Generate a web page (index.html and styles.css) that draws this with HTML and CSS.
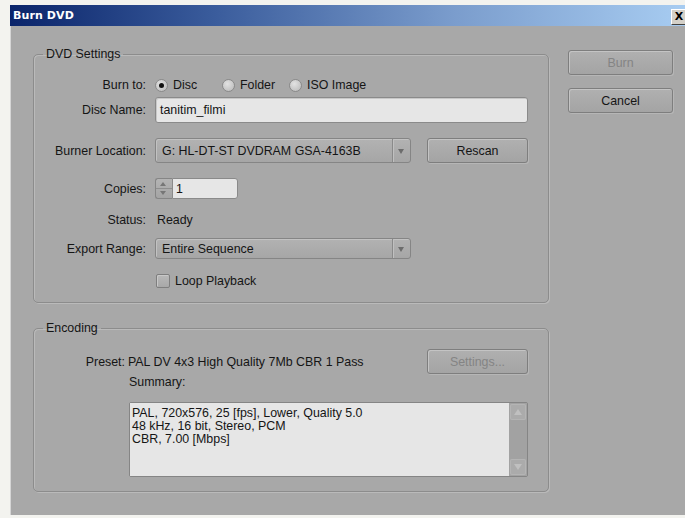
FILE: index.html
```html
<!DOCTYPE html>
<html lang="en">
<head>
<meta charset="utf-8">
<title>Burn DVD</title>
<link rel="stylesheet" href="styles.css">
</head>
<body>
<div class="window">
  <div class="titlebar">
    <span class="title">Burn DVD</span>
    <span class="close">X</span>
  </div>
  <div class="client">
    <div class="main">
      <fieldset class="group settings">
        <legend>DVD Settings</legend>

        <div class="row r-burn">
          <span class="lbl">Burn to:</span>
          <div class="radios">
            <label class="opt"><span class="radio checked"></span>Disc</label>
            <label class="opt"><span class="radio"></span>Folder</label>
            <label class="opt"><span class="radio"></span>ISO Image</label>
          </div>
        </div>

        <div class="row r-name">
          <span class="lbl">Disc Name:</span>
          <div class="field name">tanitim_filmi</div>
        </div>

        <div class="row r-burner">
          <span class="lbl">Burner Location:</span>
          <div class="select">
            <span class="sel-text">G: HL-DT-ST DVDRAM GSA-4163B</span>
            <span class="sel-arrow"></span>
          </div>
          <button class="btn rescan">Rescan</button>
        </div>

        <div class="row r-copies">
          <span class="lbl">Copies:</span>
          <div class="spin">
            <span class="spin-btns"><span class="up"></span><span class="down"></span></span>
            <span class="spin-val">1</span>
          </div>
        </div>

        <div class="row r-status">
          <span class="lbl">Status:</span>
          <span class="val">Ready</span>
        </div>

        <div class="row r-range">
          <span class="lbl">Export Range:</span>
          <div class="select">
            <span class="sel-text">Entire Sequence</span>
            <span class="sel-arrow"></span>
          </div>
        </div>

        <div class="row r-loop">
          <span class="lbl"></span>
          <label class="check"><span class="box"></span>Loop Playback</label>
        </div>
      </fieldset>

      <fieldset class="group encoding">
        <legend>Encoding</legend>

        <div class="row r-preset">
          <span class="lbl enc-lbl">Preset:</span>
          <span class="val">PAL DV 4x3 High Quality 7Mb CBR 1 Pass</span>
          <button class="btn disabled settings-btn">Settings...</button>
        </div>

        <div class="r-summary">Summary:</div>

        <div class="summary-box">
          <div class="summary-text">PAL, 720x576, 25 [fps], Lower, Quality 5.0<br>48 kHz, 16 bit, Stereo, PCM<br>CBR, 7.00 [Mbps]</div>
          <div class="scrollbar">
            <span class="sb-btn sb-up"></span>
            <span class="sb-track"></span>
            <span class="sb-btn sb-down"></span>
          </div>
        </div>
      </fieldset>
    </div>

    <div class="actions">
      <button class="btn disabled">Burn</button>
      <button class="btn">Cancel</button>
    </div>
  </div>
</div>
</body>
</html>
```

FILE: styles.css
```css
html, body {
  margin: 0;
  padding: 0;
  background: #f3f3ef;
  overflow: hidden;
}

body {
  font-family: "Liberation Sans", Arial, sans-serif;
  font-size: 12.4px;
  color: #151515;
}

.window {
  margin: 5px 0 0 10px;
  width: 679px;
}

/* caption bar */
.titlebar {
  height: 21px;
  display: flex;
  align-items: center;
  justify-content: space-between;
  background: linear-gradient(to right, #0a246a 0%, #3a5c9c 30%, #7a9ccc 65%, #a8cdf2 100%);
}

.title {
  font-family: "DejaVu Sans", Verdana, sans-serif;
  font-weight: bold;
  font-size: 11px;
  color: #ffffff;
  padding-left: 3px;
  letter-spacing: 0.1px;
}

.close {
  width: 14px;
  height: 14px;
  margin-right: 2px;
  margin-top: 3px;
  background: #d4d0c8;
  border: 1px solid;
  border-color: #ffffff #404040 #404040 #ffffff;
  font-family: "DejaVu Sans", Verdana, sans-serif;
  font-weight: bold;
  font-size: 11px;
  line-height: 14px;
  text-align: center;
  color: #000;
}

/* dialog body */
.client {
  height: 489px;
  background: #a8a8a8;
  border-left: 1px solid #d6d6d6;
  box-sizing: border-box;
  padding-left: 22px;
  display: flex;
  align-items: flex-start;
}

.main {
  width: 516px;
}

.group {
  margin: 0;
  padding: 14px 20px 13px 0;
  border: 1px solid #8c8c8c;
  border-radius: 5px;
  box-shadow: inset 1px 1px 0 #bababa, 1px 1px 0 #bababa;
}

.group legend {
  margin-left: 9px;
  padding: 0 3px;
  line-height: 14px;
  color: #151515;
}

.settings {
  margin-top: 21px;
}

.encoding {
  margin-top: 18px;
  padding-bottom: 14px;
}

.row {
  display: flex;
  align-items: center;
}

.lbl {
  width: 112px;
  flex: none;
  text-align: right;
  margin-right: 9px;
}

.r-burn   { height: 20px; }
.r-name   { height: 26px; margin-top: 2px; }
.r-burner { height: 25px; margin-top: 15px; }
.r-copies { height: 21px; margin-top: 15px; }
.r-status { height: 20px; margin-top: 11px; }
.r-range  { height: 21px; margin-top: 8px; }
.r-loop   { height: 16px; margin-top: 14px; }

/* radio group */
.radios {
  display: flex;
  align-items: center;
}

.opt {
  display: flex;
  align-items: center;
  width: 67px;
}

.opt:last-child {
  width: auto;
}

.radio {
  width: 11px;
  height: 11px;
  border: 1px solid #8a8a8a;
  border-radius: 50%;
  background: radial-gradient(circle at 40% 35%, #e2e2e2 0%, #c4c4c4 70%, #b2b2b2 100%);
  margin-right: 5px;
  position: relative;
  flex: none;
}

.radio.checked::after {
  content: "";
  position: absolute;
  left: 3px;
  top: 3px;
  width: 5px;
  height: 5px;
  border-radius: 50%;
  background: #111;
}

/* text fields */
.field {
  box-sizing: border-box;
  height: 26px;
  width: 373px;
  background: #e6e6e6;
  border: 1px solid #8a8a8a;
  border-radius: 3px;
  padding: 0 4px;
  line-height: 24px;
  box-shadow: inset 1px 1px 0 #c8c8c8;
}

/* dropdowns */
.select {
  box-sizing: border-box;
  width: 256px;
  height: 100%;
  display: flex;
  border: 1px solid #858585;
  border-radius: 3px;
  background: linear-gradient(#b2b2b2, #a6a6a6);
  box-shadow: inset 1px 1px 0 #c2c2c2;
}

.sel-text {
  flex: 1;
  padding-left: 6px;
  display: flex;
  align-items: center;
}

.sel-arrow {
  width: 17px;
  border-left: 1px solid #8a8a8a;
  box-shadow: inset 1px 0 0 #c0c0c0;
  position: relative;
}

.sel-arrow::after {
  content: "";
  position: absolute;
  left: 5px;
  top: 50%;
  margin-top: -2px;
  border-left: 3.5px solid transparent;
  border-right: 3.5px solid transparent;
  border-top: 5px solid #6c6c6c;
}

/* push buttons */
.btn {
  box-sizing: border-box;
  font: inherit;
  color: #151515;
  border: 1px solid #7e7e7e;
  border-radius: 3px;
  background: linear-gradient(#b0b0b0, #a4a4a4);
  box-shadow: inset 1px 1px 0 #c4c4c4, 1px 1px 0 #b6b6b6;
  padding: 0;
  text-align: center;
}

.btn.disabled {
  color: #848484;
}

.rescan {
  width: 101px;
  height: 25px;
  margin-left: 16px;
}

/* spinner */
.spin {
  display: flex;
  height: 100%;
  width: 83px;
  box-sizing: border-box;
}

.spin-btns {
  width: 17px;
  display: flex;
  flex-direction: column;
  box-sizing: border-box;
  border: 1px solid #858585;
  border-right: none;
  border-radius: 3px 0 0 3px;
  background: linear-gradient(#b4b4b4, #a4a4a4);
}

.spin-btns span {
  flex: 1;
  position: relative;
}

.spin-btns .up {
  border-bottom: 1px solid #8e8e8e;
}

.spin-btns .up::after,
.spin-btns .down::after {
  content: "";
  position: absolute;
  left: 4px;
  border-left: 3.5px solid transparent;
  border-right: 3.5px solid transparent;
}

.spin-btns .up::after {
  bottom: 2px;
  border-bottom: 4px solid #767676;
}

.spin-btns .down::after {
  top: 2px;
  border-top: 4px solid #767676;
}

.spin-val {
  flex: 1;
  box-sizing: border-box;
  background: #e6e6e6;
  border: 1px solid #8a8a8a;
  border-radius: 0 3px 3px 0;
  padding-left: 3px;
  display: flex;
  align-items: center;
}

.r-status .val {
  padding-left: 2px;
}

/* checkbox */
.check {
  display: flex;
  align-items: center;
  margin-left: 1px;
}

.box {
  width: 12px;
  height: 12px;
  border: 1px solid #7e7e7e;
  border-radius: 2px;
  background: linear-gradient(#b8b8b8, #a8a8a8);
  box-shadow: inset 1px 1px 0 #c8c8c8;
  margin-right: 5px;
}

/* encoding section */
.r-preset {
  height: 25px;
}

.enc-lbl {
  width: 91px;
  margin-right: 3px;
}

.settings-btn {
  width: 101px;
  height: 25px;
  margin-left: auto;
}

.r-summary {
  height: 14px;
  line-height: 14px;
  margin-top: 1px;
  padding-left: 95px;
}

.summary-box {
  margin-top: 13px;
  margin-left: 95px;
  height: 75px;
  display: flex;
  box-sizing: border-box;
  border: 1px solid #858585;
  border-radius: 2px;
}

.summary-text {
  flex: 1;
  background: #e6e6e6;
  padding: 4px 0 0 2px;
  line-height: 13px;
}

.scrollbar {
  width: 18px;
  display: flex;
  flex-direction: column;
  background: #a2a2a2;
}

.sb-btn {
  height: 16px;
  margin: 1px;
  border-radius: 2px;
  background: #ababab;
  box-shadow: inset 0 0 0 1px #b4b4b4;
  position: relative;
}

.sb-track {
  flex: 1;
}

.sb-btn::after {
  content: "";
  position: absolute;
  left: 4px;
  top: 5px;
  border-left: 4px solid transparent;
  border-right: 4px solid transparent;
}

.sb-up::after {
  border-bottom: 6px solid #c0c0c0;
}

.sb-down::after {
  border-top: 6px solid #c0c0c0;
}

/* right-hand command buttons */
.actions {
  margin-left: 19px;
  margin-top: 24px;
  display: flex;
  flex-direction: column;
}

.actions .btn {
  width: 105px;
  height: 25px;
}

.actions .btn + .btn {
  margin-top: 13px;
}
```
